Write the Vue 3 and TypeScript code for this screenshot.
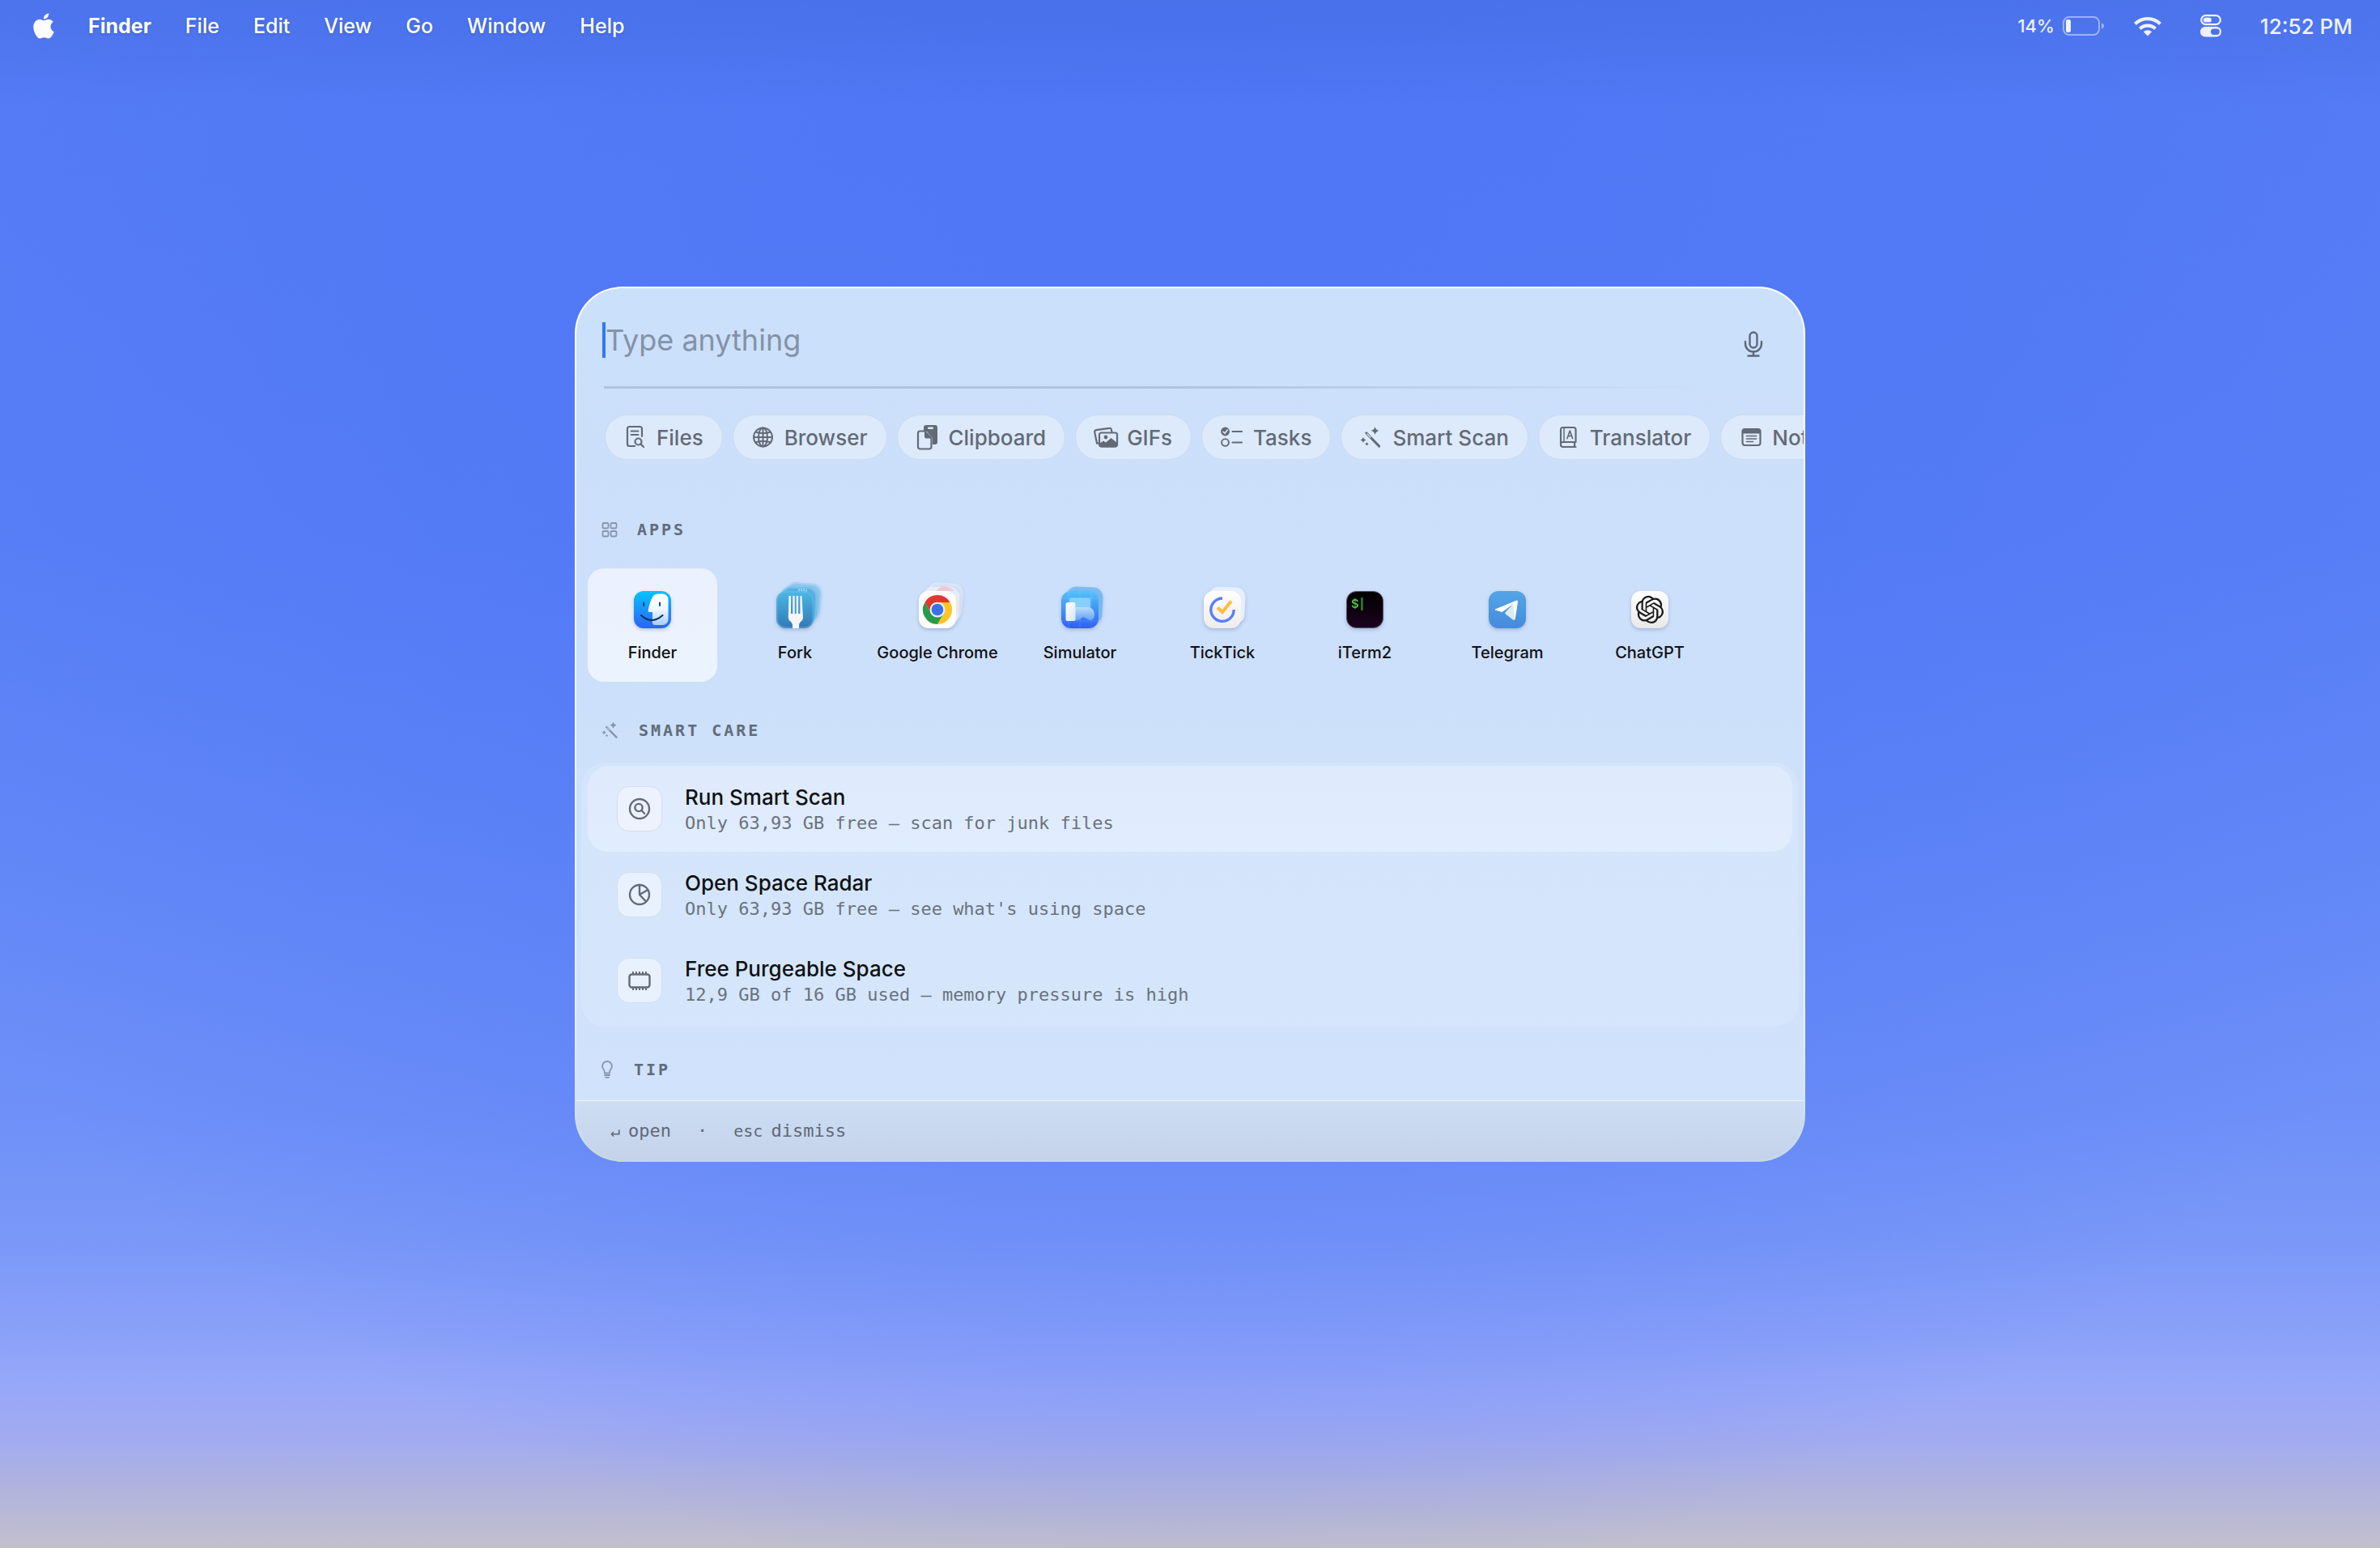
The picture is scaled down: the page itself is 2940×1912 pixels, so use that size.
<script setup lang="ts">
import { ref } from 'vue'

interface Chip { id: string; label: string; icon: string }
interface AppItem { id: string; label: string; art: string }
interface Action { id: string; title: string; detail: string; icon: string }

const query = ref('')
const selectedApp = ref('finder')
const selectedAction = ref('scan')

const menus: string[] = ['File', 'Edit', 'View', 'Go', 'Window', 'Help']

const wand = `
  <path d="M8 9 23.500 25" stroke="currentColor" stroke-width="3.200" stroke-linecap="round"/>
  <path d="M9 10 13 14" stroke="#dde9fb" stroke-width="1.200" stroke-linecap="round"/>
  <path d="M18.500 1q.8 4 4.800 5-4 1-4.800 5-.8-4-4.800-5 4-1 4.800-5zM4 14q.6 2.800 3.400 3.400-2.800.6-3.400 3.400-.6-2.800-3.400-3.400 2.800-.6 3.400-3.400zM8.500 20q.4 2 2.400 2.400-2 .4-2.400 2.400-.4-2-2.400-2.400 2-.4 2.400-2.400z" fill="currentColor"/>`

const chips: Chip[] = [
  { id: 'files', label: 'Files', icon: `
    <g fill="none" stroke="currentColor" stroke-width="2.200" stroke-linecap="round" stroke-linejoin="round">
      <path d="M13 25H6.500a2.500 2.500 0 0 1-2.500-2.500V3.500A2.500 2.500 0 0 1 6.500 1h13A2.500 2.500 0 0 1 22 3.500V13"/>
      <path d="M8.500 6.500h9M8.500 11h9" stroke-width="1.800"/><circle cx="17.500" cy="19.500" r="4"/><path d="m20.500 22.500 3.500 3.500"/>
    </g>` },
  { id: 'browser', label: 'Browser', icon: `
    <g fill="none" stroke="currentColor" stroke-width="2">
      <circle cx="13.500" cy="14" r="11.500"/><ellipse cx="13.500" cy="14" rx="5.500" ry="11.500"/>
      <path d="M13.500 2.500v23M2 14h23M4 7.500q9.500 3.500 19 0M4 20.500q9.500-3.500 19 0"/>
    </g>` },
  { id: 'clipboard', label: 'Clipboard', icon: `
    <path d="M12-1h11a3 3 0 0 1 3 3v18a3 3 0 0 1-3 3h-3v-8l-7-8H9V2a3 3 0 0 1 3-3z" fill="currentColor"/>
    <rect x="14" y="1.500" width="7" height="2.500" rx="1.200" fill="#ddeafc"/>
    <path d="M4.500 6.500H10l8.500 8.500v11a2.500 2.500 0 0 1-2.500 2.500H4.500A2.500 2.500 0 0 1 2 26V9a2.500 2.500 0 0 1 2.500-2.500z" fill="#ddeafc" stroke="currentColor" stroke-width="2.200" stroke-linejoin="round"/>
    <path d="M10 6.500 18.500 15.500H12.500a2.500 2.500 0 0 1-2.500-2.500z" fill="currentColor"/>` },
  { id: 'gifs', label: 'GIFs', icon: `
    <g fill="none" stroke="currentColor" stroke-width="2.200" stroke-linejoin="round" stroke-linecap="round">
      <path d="M3 21.500 0.200 7.800a2.200 2.200 0 0 1 1.800-2.600L18.500 2.800a2 2 0 0 1 2.300 1.600L21.400 7"/>
      <path d="M3 21.500h2"/>
      <rect x="6" y="8.500" width="22" height="17" rx="2.500"/>
    </g>
    <circle cx="14" cy="14" r="2.400" fill="currentColor"/>
    <path d="m6 22 5-3.500 3 2 6.500-5.500 7.500 6v3a2.500 2.500 0 0 1-2.500 2.500h-17A2.500 2.500 0 0 1 6 24z" fill="currentColor"/>` },
  { id: 'tasks', label: 'Tasks', icon: `
    <circle cx="5.500" cy="7" r="5.400" fill="currentColor"/>
    <path d="m3 7.300 2 2 3.200-4.300" fill="none" stroke="#ddeafc" stroke-width="1.600" stroke-linecap="round"/>
    <circle cx="5.500" cy="20.500" r="4.400" fill="none" stroke="currentColor" stroke-width="1.900"/>
    <path d="M14.500 7H26M14.500 20.500H26" stroke="currentColor" stroke-width="2.200" stroke-linecap="round"/>` },
  { id: 'scan', label: 'Smart Scan', icon: wand },
  { id: 'translator', label: 'Translator', icon: `
    <g fill="none" stroke="currentColor" stroke-width="2.200" stroke-linejoin="round" stroke-linecap="round">
      <path d="M22.500 26H6.500a2.500 2.500 0 0 1-2.500-2.500V4.500A2.500 2.500 0 0 1 6.500 2H20a2.500 2.500 0 0 1 2.500 2.500V20H6.500A2.500 2.500 0 0 0 4 22.500M21 20.500v5"/>
      <path d="M8 2.500V20" stroke-width="1.500"/>
      <path d="m12 15.500 3.300-9.500 3.300 9.500M13 12.500h4.600" stroke-width="1.700"/>
    </g>` },
  { id: 'notes', label: 'Notes', icon: `
    <rect x="3.500" y="4" width="22" height="20" rx="3" fill="none" stroke="currentColor" stroke-width="2.200"/>
    <path d="M3.500 9.500V6.500a3 3 0 0 1 3-3h16a3 3 0 0 1 3 3v3z" fill="currentColor"/>
    <path d="M8.500 12.500h12M8.500 16h12M8.500 19.500h8" stroke="currentColor" stroke-width="1.700" stroke-linecap="round"/>` },
]

const apps: AppItem[] = [
  { id: 'finder', label: 'Finder', art: `
    <defs>
      <linearGradient id="fd" x1="0" y1="0" x2="0" y2="1"><stop offset="0" stop-color="#06c4ff"/><stop offset="1" stop-color="#2c62f6"/></linearGradient>
      <linearGradient id="fw" x1="0" y1="0" x2="0" y2="1"><stop offset="0" stop-color="#fff"/><stop offset=".5" stop-color="#eef8fe"/><stop offset="1" stop-color="#a9cdfb"/></linearGradient>
    </defs>
    <rect width="46" height="46" rx="12" fill="url(#fd)"/>
    <path d="M30 3.500h5.500a7 7 0 0 1 7 7V35a7 7 0 0 1-7 7H26q-3 0-3-3V26h-3.500q-2.200 0-1.800-2.200Q19.500 13 24 6q2-2.500 6-2.500z" fill="url(#fw)"/>
    <path d="M12.200 14.500v3.500M32 14.500v3.500" stroke="#1b3d5c" stroke-width="1.900" stroke-linecap="round"/>
    <path d="M9 30q13 12 26.500 0" fill="none" stroke="#12305c" stroke-width="2" stroke-linecap="round"/>` },
  { id: 'fork', label: 'Fork', art: `
    <defs>
      <linearGradient id="fk" x1="0" y1="0" x2="0" y2="1"><stop offset="0" stop-color="#4db8e5"/><stop offset="1" stop-color="#2f79b5"/></linearGradient>
    </defs>
    <g transform="translate(11 -10) rotate(5 23 23)" opacity=".45"><rect width="44" height="45" rx="12" fill="#56baec"/><rect x="1" y="1" width="42" height="43" rx="11" fill="none" stroke="#8ad4f3" stroke-width="1.500"/></g>
    <g transform="translate(5 -5) rotate(2 23 23)" opacity=".7"><rect width="45" height="46" rx="12" fill="#48a8de"/><rect x="1" y="1" width="43" height="44" rx="11" fill="none" stroke="#6fc8f0" stroke-width="1.500"/></g>
    <path d="M28-3v3M31-3v3M34-3v3M37-2v3" stroke="#a4dcf6" stroke-width="1.500"/>
    <rect width="46" height="46" rx="12" fill="url(#fk)"/>
    <rect x="1" y="1" width="44" height="44" rx="11" fill="none" stroke="#6fcdf0" stroke-opacity=".6"/>
    <path d="M15.500 6h2.500v22h2.300V6h2.400v22h2V6h2.400v22h2.300V6h2l1.600 27q0 3-3 5-2 1.500-2 4.500V46h-8v-3.500q0-3-2-4.500-3.200-2-3.200-5z" fill="#f5f5f5"/>` },
  { id: 'chrome', label: 'Google Chrome', art: `
    <g transform="translate(10 -10) rotate(5 23 23)" opacity=".5"><rect width="44" height="46" rx="12" fill="#f0f5fd"/></g>
    <g transform="translate(5 -5) rotate(2 23 23)" opacity=".8"><rect width="45" height="46" rx="12" fill="#ecf1fa"/></g>
    <path d="M21 0Q31-11 44 0z" fill="#efc8d4"/><path d="M46 6q6 10 0 22z" fill="#f0e8d2"/>
    <rect width="46" height="46" rx="12" fill="#fff"/>
    <g transform="translate(5 5) scale(.75)">
      <path d="M24 12h20.800A24 24 0 0 0 3.200 12L13.600 30A12 12 0 0 1 24 12z" fill="#e2382b"/>
      <path d="M24 12h20.800A24 24 0 0 0 3.200 12L13.600 30A12 12 0 0 1 24 12z" fill="#fdc426" transform="rotate(120 24 24)"/>
      <path d="M24 12h20.800A24 24 0 0 0 3.200 12L13.600 30A12 12 0 0 1 24 12z" fill="#2b9a48" transform="rotate(240 24 24)"/>
      <circle cx="24" cy="24" r="12.500" fill="#e9f0fb"/><circle cx="24" cy="24" r="9.800" fill="#3a72e4"/>
    </g>` },
  { id: 'simulator', label: 'Simulator', art: `
    <defs>
      <linearGradient id="sm" x1="0" y1="0" x2="0" y2="1"><stop offset="0" stop-color="#54c2f8"/><stop offset="1" stop-color="#2f60f5"/></linearGradient>
      <linearGradient id="sw" x1="0" y1="0" x2="0" y2="1"><stop offset="0" stop-color="#b9def9"/><stop offset="1" stop-color="#5f9ff6"/></linearGradient>
      <linearGradient id="sp" x1="0" y1="0" x2="1" y2="1"><stop offset="0" stop-color="#fff"/><stop offset="1" stop-color="#d5e6fc"/></linearGradient>
    </defs>
    <rect x="6" y="-5" width="45" height="45" rx="12" fill="#65b4f5" opacity=".75" transform="rotate(3 28 18)"/>
    <rect width="46" height="46" rx="12" fill="url(#sm)"/>
    <path d="M9 0v46M23 0v46M37 0v46M0 9h46M0 37h46" stroke="#fff" stroke-opacity=".12"/>
    <rect x="10" y="8.500" width="26" height="16" rx="2" fill="#8ed4fa" opacity=".9"/>
    <path d="M17 20h16q8 1 8 9 0 7-5 7-3 0-5-2l-4-2-4 3-6 2z" fill="url(#sw)"/>
    <rect x="5.500" y="14" width="12" height="23" rx="2.500" fill="url(#sp)"/>` },
  { id: 'ticktick', label: 'TickTick', art: `
    <defs><linearGradient id="tt" x1="0" y1="0" x2="0" y2="1"><stop offset="0" stop-color="#fff"/><stop offset="1" stop-color="#ececec"/></linearGradient></defs>
    <rect x="6" y="-5" width="45" height="45" rx="12" fill="#e6effc" transform="rotate(3 28 18)"/>
    <rect width="46" height="46" rx="12" fill="url(#tt)"/>
    <path d="M23 9A14.200 14.200 0 1 0 37.200 23" fill="none" stroke="#5b7dfb" stroke-width="3.400"/>
    <path d="m17 20.500 6 5.500L34 12.500" fill="none" stroke="#ffbc3a" stroke-width="4"/>` },
  { id: 'iterm', label: 'iTerm2', art: `
    <defs><linearGradient id="it" x1="0" y1="0" x2="0" y2="1"><stop offset="0" stop-color="#000"/><stop offset="1" stop-color="#1c0220"/></linearGradient></defs>
    <rect x=".5" y=".5" width="45" height="45" rx="12" fill="url(#it)" stroke="#5d5266" stroke-width="1"/>
    <text x="6" y="21" font-family="Inter, 'Liberation Sans', sans-serif" font-weight="600" font-size="15" fill="#4fc240">$</text>
    <rect x="18" y="8" width="2.800" height="16" fill="#2c7426"/>` },
  { id: 'telegram', label: 'Telegram', art: `
    <defs>
      <linearGradient id="tg" x1="0" y1="0" x2="0" y2="1"><stop offset="0" stop-color="#54a5e6"/><stop offset="1" stop-color="#458bdc"/></linearGradient>
    </defs>
    <rect width="46" height="46" rx="12" fill="url(#tg)"/>
    <path d="M8.300 22.300 34 11.700q2.300-.6 2 1.600L32.800 34q-.6 2.500-2.800 1.200l-9-7q-1-1 0-2L30.500 16 17.300 25.500q-1 .6-2 .3l-6.800-2.100q-1.500-.6-.2-1.400z" fill="#fff"/>
    <path d="M20.500 26.500 30.500 16 32 35.500q-.8.400-2-.3l-9-7q-1-1-.5-1.700z" fill="#dcebf9"/>` },
  { id: 'chatgpt', label: 'ChatGPT', art: `
    <defs><linearGradient id="cg" x1="0" y1="0" x2="0" y2="1"><stop offset="0" stop-color="#fff"/><stop offset="1" stop-color="#e9e9e9"/></linearGradient></defs>
    <rect width="46" height="46" rx="12" fill="url(#cg)"/>
    <path transform="translate(5.800 5.800) scale(1.430)" fill="#1a1a1a" d="M22.2819 9.8211a5.9847 5.9847 0 0 0-.5157-4.9108 6.0462 6.0462 0 0 0-6.5098-2.9A6.0651 6.0651 0 0 0 4.9807 4.1818a5.9847 5.9847 0 0 0-3.9977 2.9 6.0462 6.0462 0 0 0 .7427 7.0966 5.98 5.98 0 0 0 .511 4.9107 6.051 6.051 0 0 0 6.5146 2.9001A5.9847 5.9847 0 0 0 13.2599 24a6.0557 6.0557 0 0 0 5.7718-4.2058 5.9894 5.9894 0 0 0 3.9977-2.9001 6.0557 6.0557 0 0 0-.7475-7.0729zm-9.022 12.6081a4.4755 4.4755 0 0 1-2.8764-1.0408l.1419-.0804 4.7783-2.7582a.7948.7948 0 0 0 .3927-.6813v-6.7369l2.02 1.1686a.071.071 0 0 1 .038.052v5.5826a4.504 4.504 0 0 1-4.4945 4.4944zm-9.6607-4.1254a4.4708 4.4708 0 0 1-.5346-3.0137l.142.0852 4.783 2.7582a.7712.7712 0 0 0 .7806 0l5.8428-3.3685v2.3324a.0804.0804 0 0 1-.0332.0615L9.74 19.9502a4.4992 4.4992 0 0 1-6.1408-1.6464zM2.3408 7.8956a4.485 4.485 0 0 1 2.3655-1.9728V11.6a.7664.7664 0 0 0 .3879.6765l5.8144 3.3543-2.0201 1.1685a.0757.0757 0 0 1-.071 0l-4.8303-2.7865A4.504 4.504 0 0 1 2.3408 7.872zm16.5963 3.8558L13.1038 8.364 15.1192 7.2a.0757.0757 0 0 1 .071 0l4.8303 2.7913a4.4944 4.4944 0 0 1-.6765 8.1042v-5.6772a.79.79 0 0 0-.407-.667zm2.0107-3.0231l-.142-.0852-4.7735-2.7818a.7759.7759 0 0 0-.7854 0L9.409 9.2297V6.8974a.0662.0662 0 0 1 .0284-.0615l4.8303-2.7866a4.4992 4.4992 0 0 1 6.6802 4.66zM8.3065 12.863l-2.02-1.1638a.0804.0804 0 0 1-.038-.0567V6.0742a4.4992 4.4992 0 0 1 7.3757-3.4537l-.142.0805L8.704 5.459a.7948.7948 0 0 0-.3927.6813zm1.0976-2.3654l2.602-1.4998 2.6069 1.4998v2.9994l-2.5974 1.4997-2.6067-1.4997Z"/>` },
]

const actions: Action[] = [
  { id: 'scan', title: 'Run Smart Scan', detail: 'Only 63,93 GB free — scan for junk files', icon: `
    <g fill="none" stroke="currentColor" stroke-width="2.400" stroke-linecap="round">
      <circle cx="14" cy="14" r="12"/><circle cx="13" cy="12.500" r="4.600"/><path d="m16.500 16 3.500 3.800"/>
    </g>` },
  { id: 'radar', title: 'Open Space Radar', detail: "Only 63,93 GB free — see what's using space", icon: `
    <g fill="none" stroke="currentColor" stroke-width="2.400" stroke-linecap="round">
      <circle cx="14" cy="14" r="12"/><path d="M14 2v12l8 8.500M14 14l9.500-5.500"/>
    </g>` },
  { id: 'purge', title: 'Free Purgeable Space', detail: '12,9 GB of 16 GB used — memory pressure is high', icon: `
    <rect x="1.500" y="6.500" width="25" height="16" rx="3" fill="none" stroke="currentColor" stroke-width="2.400"/>
    <path d="M6 3v3M10 3v3M14 3v3M18 3v3M22 3v3M6 23v3M10 23v3M14 23v3M18 23v3M22 23v3" stroke="currentColor" stroke-width="2"/>` },
]
</script>

<template>
  <div class="desktop">
    <header class="menubar">
      <nav class="menus" aria-label="Menu bar">
        <button class="menu" type="button" aria-label="Apple menu">
          <svg class="apple" viewBox="2 0 20 24" aria-hidden="true"><path fill="currentColor" d="M12.152 6.896c-.948 0-2.415-1.078-3.96-1.04-2.04.027-3.91 1.183-4.961 3.014-2.117 3.675-.546 9.103 1.519 12.09 1.013 1.454 2.208 3.09 3.792 3.039 1.52-.065 2.09-.987 3.935-.987 1.831 0 2.35.987 3.96.948 1.637-.026 2.676-1.48 3.676-2.948 1.156-1.688 1.636-3.325 1.662-3.415-.039-.013-3.182-1.221-3.22-4.857-.026-3.04 2.48-4.494 2.597-4.559-1.429-2.09-3.623-2.324-4.39-2.376-2-.156-3.675 1.09-4.61 1.09zM15.53 3.83c.843-1.012 1.4-2.427 1.245-3.83-1.207.052-2.662.805-3.532 1.818-.78.896-1.454 2.338-1.273 3.714 1.338.104 2.715-.688 3.559-1.701"/></svg>
        </button>
        <button class="menu menu-app" type="button">Finder</button>
        <button v-for="m in menus" :key="m" class="menu" type="button">{{ m }}</button>
      </nav>
      <div class="status">
        <span class="battery">
          14%
          <svg width="52" height="26" viewBox="0 0 52 26" aria-hidden="true">
            <rect x="1" y="2" width="44" height="22" rx="7" fill="none" stroke="#fff" stroke-opacity=".45" stroke-width="2"/>
            <rect x="4" y="5" width="6" height="16" rx="2.500" fill="#eef2ff"/>
            <path d="M48 9.500q3 1 3 3.500t-3 3.500z" fill="#fff" fill-opacity=".45"/>
          </svg>
        </span>
        <svg width="34" height="26" viewBox="0 0 34 26" aria-hidden="true">
          <g fill="none" stroke="#eef2ff" stroke-width="4.200">
            <path d="M1.500 10.500a22 22 0 0 1 31 0"/><path d="M7.500 16.500a13.600 13.600 0 0 1 19 0"/>
          </g>
          <path d="M11.800 20.300a7.500 7.500 0 0 1 10.400 0L17 25.500z" fill="#eef2ff"/>
        </svg>
        <svg width="26" height="28" viewBox="0 0 26 28" aria-hidden="true">
          <rect x="1.200" y="1.200" width="23.600" height="11" rx="5.500" fill="none" stroke="#eef2ff" stroke-width="2.200"/>
          <rect x="3.800" y="3.800" width="10" height="5.800" rx="2.900" fill="#eef2ff"/>
          <rect y="15" width="26" height="12.500" rx="6.200" fill="#eef2ff"/>
          <rect x="13" y="17.500" width="10.800" height="7.500" rx="3.700" fill="#4a70ea"/>
        </svg>
        <time class="clock">12:52 PM</time>
      </div>
    </header>

    <main class="launcher">
      <form class="search" @submit.prevent>
        <span class="caret" aria-hidden="true"></span>
        <input v-model="query" class="field" type="text" placeholder="Type anything" aria-label="Type anything">
        <button class="mic" type="button" aria-label="Dictate">
          <svg width="24" height="32" viewBox="0 0 24 32" fill="none" stroke="currentColor" stroke-width="2.400" stroke-linecap="round" aria-hidden="true">
            <rect x="7.500" y="1.500" width="9" height="19" rx="4.500"/><path d="M2 13v2.500a10 10 0 0 0 20 0V13M12 25.500V30M5.500 30.500h13"/>
          </svg>
        </button>
      </form>
      <hr class="rule">

      <div class="chips">
        <button v-for="c in chips" :key="c.id" class="chip" type="button">
          <svg class="glyph" viewBox="0 0 28 28" aria-hidden="true" v-html="c.icon"></svg>
          {{ c.label }}
        </button>
      </div>

      <section>
        <h2 class="heading">
          <svg width="20" height="20" viewBox="0 0 20 20" fill="none" stroke="currentColor" stroke-width="1.800" aria-hidden="true">
            <rect x="1.500" y="2" width="7" height="6.500" rx="1.500"/><rect x="11.500" y="2" width="7" height="6.500" rx="1.500"/>
            <rect x="1.500" y="12" width="7" height="6.500" rx="1.500"/><rect x="11.500" y="12" width="7" height="6.500" rx="1.500"/>
          </svg>
          APPS
        </h2>
        <div class="apps">
          <button v-for="a in apps" :key="a.id" class="app" :class="{ selected: a.id === selectedApp }" type="button" @click="selectedApp = a.id">
            <svg class="art" viewBox="0 0 46 46" aria-hidden="true" v-html="a.art"></svg>
            {{ a.label }}
          </button>
        </div>
      </section>

      <section>
        <h2 class="heading">
          <svg width="22" height="22" viewBox="0 0 28 28" aria-hidden="true" v-html="wand"></svg>
          SMART CARE
        </h2>
        <div class="card">
          <button v-for="r in actions" :key="r.id" class="action" :class="{ selected: r.id === selectedAction }" type="button" @click="selectedAction = r.id">
            <span class="badge"><svg class="glyph" viewBox="0 0 28 28" aria-hidden="true" v-html="r.icon"></svg></span>
            <span class="copy">
              <span class="title">{{ r.title }}</span>
              <span class="detail">{{ r.detail }}</span>
            </span>
          </button>
        </div>
      </section>

      <section>
        <h2 class="heading">
          <svg width="16" height="22" viewBox="0 0 16 22" fill="none" stroke="currentColor" stroke-width="1.800" stroke-linecap="round" aria-hidden="true">
            <path d="M4 15.500Q3.800 12 2.200 10A6 6 0 0 1 1 7a6 6 0 0 1 12 0 6 6 0 0 1-1.200 3Q10.200 12 10 15.500zM4 18h6M5 20.800h4"/>
          </svg>
          TIP
        </h2>
      </section>

      <footer class="hints">
        <span class="hint"><kbd>↵</kbd>open</span>
        <span class="dot">·</span>
        <span class="hint"><kbd>esc</kbd>dismiss</span>
      </footer>
    </main>
  </div>
</template>

<style>
body {
  margin: 0;
}
</style>

<style scoped>
.desktop {
  box-sizing: border-box;
  min-height: 100vh;
  display: flex;
  flex-direction: column;
  font-family: Inter, "Liberation Sans", sans-serif;
  color: #101113;
  background:
    linear-gradient(to bottom, rgba(50, 90, 200, 0.22) 0, rgba(50, 90, 200, 0.18) 40px, rgba(50, 90, 200, 0) 130px),
    radial-gradient(ellipse 78% 122% at 50% 0, rgba(78, 118, 246, 0.9) 0, rgba(78, 118, 246, 0.6) 40%, rgba(78, 118, 246, 0) 85%),
    linear-gradient(to bottom, #567df5 0, #5a80f6 35%, #6388f7 55%, #6e90f8 72%, #7a98f8 80%, #8aa1f9 86%, #98a8f8 90%, #a2abef 93%, #b0b3de 96%, #c2bfcc 100%);
}

button {
  margin: 0;
  padding: 0;
  border: 0;
  background: none;
  font: inherit;
  color: inherit;
  text-align: left;
}

/* Menu bar */
.menubar {
  height: 64px;
  padding: 0 34px 0 41px;
  box-sizing: border-box;
  display: flex;
  justify-content: space-between;
  align-items: center;
  color: #fff;
  font-size: 25px;
  font-weight: 500;
}

.menus,
.status {
  display: flex;
  align-items: center;
}

.menus {
  gap: 42px;
}

.menu {
  display: flex;
  text-shadow: 0 1px 3px rgba(30, 50, 120, 0.3);
}

.menu-app {
  font-weight: 700;
}

.apple {
  width: 26px;
  height: 32px;
}

.status {
  gap: 48px;
  color: #eef2ff;
}

.battery {
  display: flex;
  align-items: center;
  gap: 10px;
  margin-right: -12px;
  font-size: 22px;
}

.clock {
  font-size: 26px;
}

/* Launcher panel */
.launcher {
  box-sizing: border-box;
  width: 100%;
  max-width: 1520px;
  margin: 290px auto 0;
  overflow: hidden;
  border: 2px solid transparent;
  border-radius: 58px;
  background:
    linear-gradient(to bottom, #cbe0fb 0, #ccdffb 40%, #cde1fa 55%, #d2e3fc 100%) padding-box,
    linear-gradient(to bottom, #fff 0, #e6f0fc 85%, #c6d9df 100%) border-box;
}

.search {
  display: flex;
  align-items: center;
  box-sizing: border-box;
  height: 121px;
  padding: 6px 50px 0 32px;
}

.caret {
  width: 4px;
  height: 44px;
  background: #2f78f7;
}

.field {
  flex: 1;
  min-width: 0;
  height: 56px;
  padding: 0;
  border: 0;
  outline: 0;
  background: none;
  font: 400 36px/56px Inter, "Liberation Sans", sans-serif;
  color: #101113;
}

.field::placeholder {
  color: #8492a6;
  opacity: 1;
}

.mic {
  display: flex;
  margin-top: 10px;
  color: #5d6876;
}

.rule {
  height: 3px;
  margin: 0 34px;
  border: 0;
  background: linear-gradient(to right, #b0c2de 0, #b0c2de 48%, rgba(176, 194, 222, 0) 94%);
}

.chips {
  display: flex;
  gap: 12px;
  margin-top: 32px;
  padding-left: 35px;
  overflow: hidden;
}

.chip {
  flex: none;
  box-sizing: border-box;
  height: 56px;
  padding: 0 23px;
  display: flex;
  align-items: center;
  gap: 12px;
  border: 1px solid #cedaeb;
  border-radius: 28px;
  background: #ddeafc;
  color: #636a75;
  font-size: 26px;
  font-weight: 500;
}

.glyph {
  width: 28px;
  height: 28px;
  overflow: visible;
}

.heading {
  height: 40px;
  margin: 0;
  padding-left: 31px;
  display: flex;
  align-items: center;
  gap: 24px;
  font: 700 20px/40px "DejaVu Sans Mono", "Liberation Mono", monospace;
  letter-spacing: 3px;
  color: #626c7a;
}

.heading svg {
  color: #8795aa;
}

/* App grid */
.chips + section {
  margin-top: 66px;
}

.apps {
  display: flex;
  gap: 16px;
  padding: 28px 14px 40px;
}

.app {
  width: 160px;
  height: 140px;
  display: flex;
  flex-direction: column;
  align-items: center;
  gap: 18px;
  box-sizing: border-box;
  padding-top: 28px;
  border-radius: 20px;
  font-size: 20px;
  line-height: 24px;
  font-weight: 500;
  white-space: nowrap;
}

.app.selected {
  background: linear-gradient(to bottom, #ebf1fe, #ebf4fe);
}

.art {
  width: 46px;
  height: 46px;
  overflow: visible;
  filter: drop-shadow(0 2px 2px rgba(40, 60, 110, 0.25));
}

/* Suggested actions */
.card {
  margin: 20px 6px 33px;
  padding: 4px 8px;
  border-radius: 30px;
  background: rgba(220, 234, 252, 0.45);
}

.action {
  width: 100%;
  height: 106px;
  box-sizing: border-box;
  padding: 0 36px;
  display: flex;
  align-items: center;
  gap: 28px;
  border-radius: 26px;
}

.action.selected {
  background: linear-gradient(to bottom, #dfeafd, #e0edfd);
}

.badge {
  width: 56px;
  height: 56px;
  box-sizing: border-box;
  display: flex;
  align-items: center;
  justify-content: center;
  border: 1px solid #d3dfef;
  border-radius: 15px;
  background: rgba(245, 249, 255, 0.6);
  color: #646b76;
}

.copy {
  display: flex;
  flex-direction: column;
}

.title {
  font-size: 26px;
  line-height: 36px;
  font-weight: 500;
}

.detail {
  font: 400 22px/28px "DejaVu Sans Mono", "Liberation Mono", monospace;
  color: #6a727d;
}

/* Keyboard hints */
.hints {
  height: 74px;
  margin-top: 18px;
  padding-left: 42px;
  display: flex;
  align-items: center;
  gap: 32px;
  box-sizing: border-box;
  border-top: 1px solid #eef3f9;
  background: linear-gradient(to bottom, #cdddf4, #c4d3ea);
  font: 400 22px/28px "DejaVu Sans Mono", "Liberation Mono", monospace;
  color: #5f6976;
}

.hint {
  display: flex;
  align-items: center;
  gap: 10px;
}

kbd {
  font: inherit;
  font-size: 20px;
}
</style>
